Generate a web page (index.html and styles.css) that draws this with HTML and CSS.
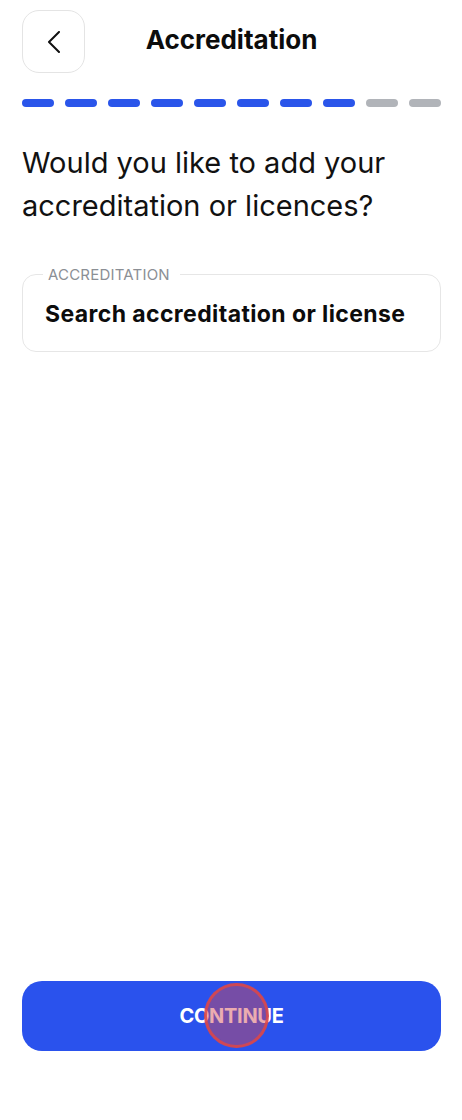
FILE: index.html
```html
<!DOCTYPE html>
<html lang="en">
<head>
    <meta charset="UTF-8">
    <meta name="viewport" content="width=device-width, initial-scale=1.0">
    <title>Accreditation</title>
    <link rel="stylesheet" href="styles.css">
</head>
<body>

<div class="screen">
    <header class="topbar">
        <button class="back-btn" aria-label="Back">
            <svg width="14" height="22" viewBox="0 0 14 22">
                <path d="M12 1 L2 11 L12 21" fill="none" stroke="#111" stroke-width="2" stroke-linecap="round" stroke-linejoin="round"/>
            </svg>
        </button>
        <h1 class="title">Accreditation</h1>
        <div class="spacer"></div>
    </header>

    <div class="progress">
        <span class="step done"></span>
        <span class="step done"></span>
        <span class="step done"></span>
        <span class="step done"></span>
        <span class="step done"></span>
        <span class="step done"></span>
        <span class="step done"></span>
        <span class="step done"></span>
        <span class="step"></span>
        <span class="step"></span>
    </div>

    <h2 class="question">Would you like to add your accreditation or licences?</h2>

    <fieldset class="field">
        <legend>ACCREDITATION</legend>
        <div class="field-value">Search accreditation or license</div>
    </fieldset>

    <div class="filler"></div>

    <div class="footer">
        <button class="continue-btn">CONTINUE</button>
        <span class="touch"></span>
    </div>
</div>

</body>
</html>
```

FILE: styles.css
```css
* {
    box-sizing: border-box;
}

html, body {
    margin: 0;
    padding: 0;
    background-color: #fff;
}

body {
    font-family: "Inter", "Noto Sans", sans-serif;
    color: #111;
}

.screen {
    height: 1120px;
    padding: 10px 21px 0 22px;
    display: flex;
    flex-direction: column;
}

.topbar {
    display: flex;
    align-items: center;
    height: 63px;
}

.back-btn {
    width: 63px;
    height: 63px;
    border: 1.5px solid #e4e4e4;
    border-radius: 17px;
    background-color: #fff;
    display: flex;
    align-items: center;
    justify-content: center;
    padding: 0;
    cursor: pointer;
}

.title {
    flex: 1;
    margin: 0 0 4px 0;
    text-align: center;
    font-size: 26px;
    font-weight: 700;
    color: #0c0c0c;
}

.spacer {
    width: 63px;
}

.progress {
    display: flex;
    gap: 11px;
    margin-top: 26px;
}

.step {
    width: 32px;
    height: 8px;
    border-radius: 4px;
    background-color: #b1b4b9;
}

.step.done {
    background-color: #2a55ea;
}

.question {
    margin: 34px 0 0 0;
    font-size: 29px;
    font-weight: 400;
    line-height: 43px;
    color: #111;
    padding-right: 40px;
}

.field {
    margin: 38px 0 0 0;
    height: 87px;
    padding: 0 20px 0 22px;
    border: 1.5px solid #e6e6e6;
    border-radius: 14px;
    min-inline-size: auto;
}

.field legend {
    padding: 0 10px 0 5px;
    margin-left: -2px;
    font-size: 15px;
    color: #8b8f95;
    letter-spacing: 0.2px;
}

.field-value {
    margin-top: 16px;
    font-size: 23px;
    font-weight: 700;
    letter-spacing: 0.4px;
    color: #0c0c0c;
}

.filler {
    flex: 1;
}

.footer {
    position: relative;
    margin-bottom: 69px;
}

.continue-btn {
    width: 100%;
    height: 70px;
    border: none;
    border-radius: 20px;
    background-color: #2a52ed;
    color: #fff;
    font-family: "Inter", "Noto Sans", sans-serif;
    font-size: 20px;
    font-weight: 700;
    letter-spacing: -0.3px;
    cursor: pointer;
}

.touch {
    position: absolute;
    left: 182px;
    top: 2px;
    width: 65px;
    height: 65px;
    border-radius: 50%;
    border: 3px solid rgba(222, 70, 70, 0.85);
    background-color: rgba(210, 70, 80, 0.45);
}
```
